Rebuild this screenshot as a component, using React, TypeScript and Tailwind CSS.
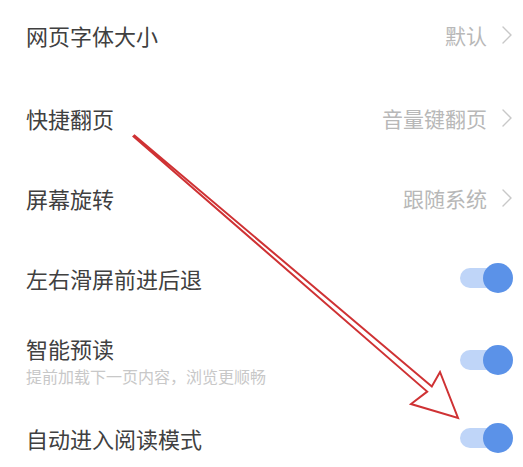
import React from 'react';

type Row =
  | { kind: 'link'; label: string; value: string; h: string }
  | { kind: 'toggle'; label: string; sub?: string; h: string };

const rows: Row[] = [
  { kind: 'link', label: '网页字体大小', value: '默认', h: 'h-[78px] pb-2' },
  { kind: 'link', label: '快捷翻页', value: '音量键翻页', h: 'h-[80px]' },
  { kind: 'link', label: '屏幕旋转', value: '跟随系统', h: 'h-[80px]' },
  { kind: 'toggle', label: '左右滑屏前进后退', h: 'h-[80px]' },
  { kind: 'toggle', label: '智能预读', sub: '提前加载下一页内容，浏览更顺畅', h: 'h-[84px]' },
  { kind: 'toggle', label: '自动进入阅读模式', h: 'h-[72px]' },
];

function Chevron() {
  return (
    <svg width="12" height="20" viewBox="0 0 12 20" className="ml-[14px]">
      <path d="M2 2 L10 10 L2 18" fill="none" stroke="#c8c8c8" strokeWidth="1.4" strokeLinecap="round" strokeLinejoin="round" />
    </svg>
  );
}

function Toggle() {
  return (
    <div className="relative w-[53px] h-[30px] flex items-center">
      <div className="w-[46px] h-[20px] rounded-full bg-[#bfd5f8]" />
      <div className="absolute right-0 top-0 w-[30px] h-[30px] rounded-full bg-[#5b92e8]" />
    </div>
  );
}

export default function App() {
  return (
    <div
      className="relative w-[523px] h-[467px] overflow-hidden bg-white"
      style={{ fontFamily: '"Noto Sans CJK SC", "Noto Sans", sans-serif' }}
    >
      <div className="flex flex-col">
        {rows.map((row) => (
          <div key={row.label} className={`flex items-center justify-between pl-[26px] pr-[10px] ${row.h}`}>
            <div className="flex flex-col">
              <span className="text-[22px] leading-[24px] text-[#404040]">{row.label}</span>
              {row.kind === 'toggle' && row.sub && (
                <span className="mt-2 text-[16px] leading-[16px] text-[#c8c8c8]">{row.sub}</span>
              )}
            </div>
            {row.kind === 'link' ? (
              <div className="flex items-center">
                <span className="text-[21px] leading-[24px] text-[#b8b8b8]">{row.value}</span>
                <Chevron />
              </div>
            ) : (
              <Toggle />
            )}
          </div>
        ))}
      </div>

      {/* annotation arrow */}
      <svg className="absolute inset-0 pointer-events-none" width="523" height="467" viewBox="0 0 523 467">
        <polygon
          points="134.5,135.5 431.8,386.4 440,372 458,418 411,404 427.2,391.6 133.5,136.5"
          fill="none"
          stroke="#cf3234"
          strokeWidth="2"
          strokeLinejoin="miter"
        />
      </svg>
    </div>
  );
}
